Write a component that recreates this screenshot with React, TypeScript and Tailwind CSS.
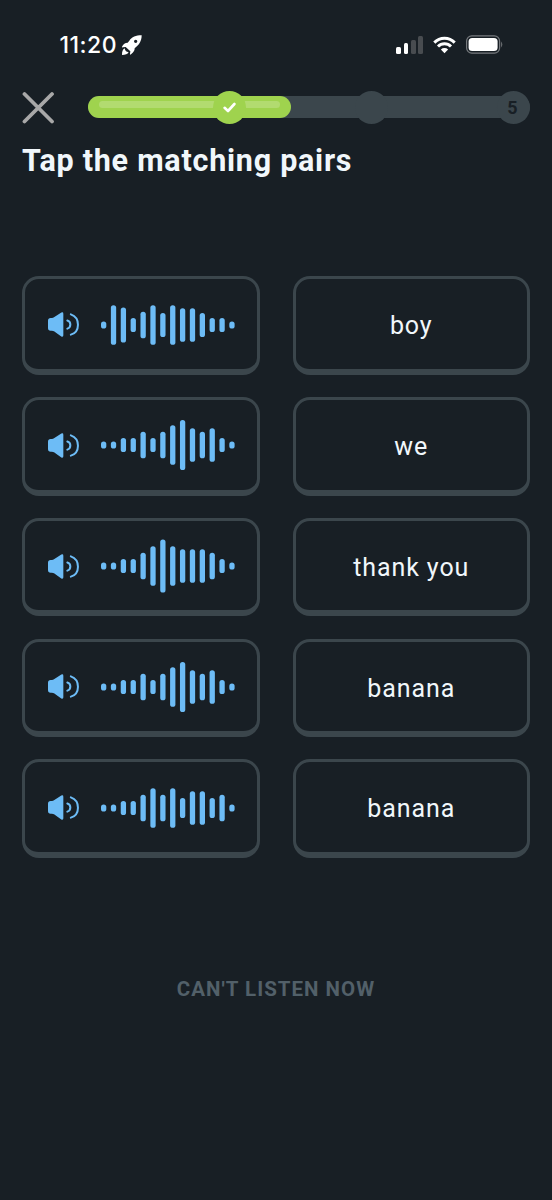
import React from 'react';

type WaveformProps = {
  bars: number[];
};

const pairs = [
  { word: 'boy', bars: [7, 39.5, 35, 14, 26.5, 39.5, 24, 39.5, 33.5, 33.5, 24, 14, 14, 7] },
  { word: 'we', bars: [7, 7, 14, 14, 26.5, 14, 26.5, 39.5, 50, 33.5, 26.5, 33.5, 14, 7] },
  { word: 'thank you', bars: [7, 7, 14, 14, 26.5, 39.5, 53, 39.5, 33.5, 33.5, 33.5, 26.5, 14, 7] },
  { word: 'banana', bars: [7, 7, 14, 14, 26.5, 14, 26.5, 39.5, 50, 33.5, 26.5, 33.5, 14, 7] },
  { word: 'banana', bars: [7, 7, 14, 14, 26.5, 39.5, 26.5, 39.5, 20, 33.5, 33.5, 20, 26.5, 7] },
];

const RocketIcon: React.FC = () => (
  <svg width="21" height="21" viewBox="0 0 63 63" fill="#fff">
    <path
      fillRule="evenodd"
      d="M62 1C44 1 33 6 25 17L20 23C12 23 7 27 3 35C2 37 4 38 6 37L14 36L28 49L27 57C26 60 28 60 30 58C38 52 41 47 41 40C53 31 62 19 62 1ZM44 14a5 5 0 1 1 0 10a5 5 0 1 1 0-10Z"
    />
    <path d="M11 40C5 43 3 50 3 60C13 60 20 58 23 51C17 52 12 47 11 40Z" />
  </svg>
);

const WifiIcon: React.FC = () => (
  <svg width="23" height="18" viewBox="0 0 23 18" fill="none" stroke="#fff" strokeWidth="3">
    <path d="M1.3 6.6a14.4 14.4 0 0 1 20.4 0" />
    <path d="M5 10.5a9.2 9.2 0 0 1 13 0" />
    <path d="M11.5 17.2L7.9 13.5a5.1 5.1 0 0 1 7.2 0Z" fill="#fff" stroke="none" />
  </svg>
);

const StatusBar: React.FC = () => (
  <header className="flex h-[90px] items-start justify-between pr-12 pl-[59.5px]">
    <div className="flex items-center gap-1 pt-[31px]">
      <span className="font-['Inter',sans-serif] text-[23px] leading-7 font-medium tracking-[0.5px] text-white">
        11:20
      </span>
      <RocketIcon />
    </div>
    <div className="flex items-center pt-[35px]">
      <div className="flex h-[18px] items-end gap-[2.7px]">
        <i className="h-[7px] w-[4.7px] rounded-[1.5px] bg-white" />
        <i className="h-[10.5px] w-[4.7px] rounded-[1.5px] bg-white" />
        <i className="h-[14px] w-[4.7px] rounded-[1.5px] bg-[#484c50]" />
        <i className="h-[18px] w-[4.7px] rounded-[1.5px] bg-[#484c50]" />
      </div>
      <div className="ml-2.5">
        <WifiIcon />
      </div>
      <svg className="ml-2.5" width="38" height="19" viewBox="0 0 38 19">
        <rect x="0.6" y="0.9" width="33" height="17.2" rx="5.2" fill="none" stroke="#777b7f" strokeWidth="1.2" />
        <rect x="2.6" y="2.9" width="29" height="13.2" rx="3.6" fill="#fff" />
        <path d="M35.2 6.5q2.200 3 0 6Z" fill="#777b7f" />
      </svg>
    </div>
  </header>
);

const ProgressBar: React.FC = () => (
  <div className="relative h-[22px] w-[442px] rounded-full bg-[#3b464c]">
    <div className="h-full w-[203px] rounded-full bg-[#9fd34e] px-[11px] pt-[5px]">
      <div className="h-[6.5px] rounded-full bg-[#b2db70]" />
    </div>
    <span className="absolute top-[-5.5px] left-[125px] flex size-[33px] items-center justify-center rounded-full bg-[#9fd34e]">
      <svg width="13" height="11" viewBox="0 0 13 11" fill="none" stroke="#fff" strokeWidth="2.6" strokeLinecap="round" strokeLinejoin="round">
        <path d="M1.6 5.8L5 9L11.4 2" />
      </svg>
    </span>
    <span className="absolute top-[-5.5px] left-[267px] size-[33px] rounded-full bg-[#3b464c]" />
    <span className="absolute top-[-5.5px] left-[409px] flex size-[33px] items-center justify-center rounded-full bg-[#3b464c] pr-0.5 font-['Roboto',sans-serif] text-[18px] font-bold text-[#181f25]">
      5
    </span>
  </div>
);

const SpeakerIcon: React.FC = () => (
  <svg width="31.5" height="25" viewBox="0 0 94.5 75" fill="none" stroke="#6dbcf6" strokeWidth="6" strokeLinecap="round">
    <path d="M0 26Q0 18 8 18H12Q15 18 18 16L40 1.5Q46 -1 46 5V70Q46 76 40 73.500L18 58Q15 56 12 56H8Q0 56 0 48Z" fill="#6dbcf6" stroke="none" />
    <path d="M58 25.500C70 29 70 46 58 50" />
    <path d="M68.500 7C97 17 97 59 68.500 68" />
  </svg>
);

const Waveform: React.FC<WaveformProps> = ({ bars }) => (
  <svg width="134" height="54" viewBox="0 0 134 54" fill="#6dbcf6">
    {bars.map((height, i) => (
      <rect key={i} x={i * 9.87} y={27 - height / 2} width="5.3" height={height} rx="2.6" />
    ))}
  </svg>
);

const cardClass =
  'flex h-[98.5px] items-center rounded-[17px] border-[3px] border-b-[6px] border-[#3b464c]';

const App: React.FC = () => {
  return (
    <div className="h-[1200px] w-[552px] overflow-hidden bg-[#181f25] font-['Roboto',sans-serif]">
      <StatusBar />
      <div className="flex h-[34px] items-center gap-[33px] pl-[22px]">
        <button aria-label="Close">
          <svg width="33" height="33" viewBox="0 0 33 33" stroke="#a8a8a8" strokeWidth="3.8" strokeLinecap="round">
            <path d="M2.500 3L30 30.500M30 3L2.500 30.500" />
          </svg>
        </button>
        <ProgressBar />
      </div>
      <h1 className="mt-[19px] pl-[22px] text-[30.5px] leading-9 font-bold tracking-[0.75px] whitespace-nowrap text-[#f1f7fb]">
        Tap the matching pairs
      </h1>
      <main className="mt-[97.300px] flex flex-col gap-[22.300px] px-[22px]">
        {pairs.map(({ word, bars }, i) => (
          <div key={i} className="grid grid-cols-2 gap-[33px]">
            <button className={`${cardClass} gap-[22px] pt-px pl-[22.700px]`}>
              <SpeakerIcon />
              <Waveform bars={bars} />
            </button>
            <button className={`${cardClass} justify-center pt-1 text-[25px] tracking-[0.9px] text-[#f1f7fb]`}>
              {word}
            </button>
          </div>
        ))}
      </main>
      <footer className="mt-[115px] text-center">
        <button className="text-[20.5px] leading-8 font-bold tracking-[1px] text-[#526069]">
          CAN'T LISTEN NOW
        </button>
      </footer>
    </div>
  );
};

export default App;
